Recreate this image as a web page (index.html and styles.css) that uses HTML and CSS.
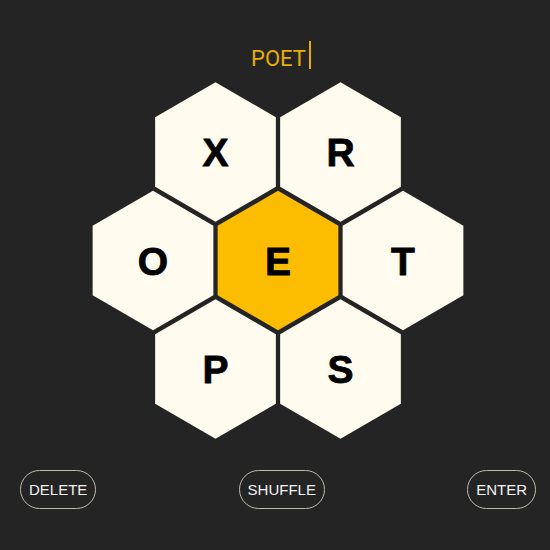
FILE: index.html
```html
<!DOCTYPE html>
<html>
<head>
<meta charset="utf-8">
<link rel="stylesheet" href="styles.css">
</head>
<body>
<div class="app">
  <div class="title">
    <span class="word">POET</span><span class="cursor"></span>
  </div>
  <div class="hive-wrap">
    <svg class="hive" width="380" height="360" viewBox="0 0 380 360">
      <defs>
        <polygon id="hex" points="0,-69.7 60.36,-34.85 60.36,34.85 0,69.7 -60.36,34.85 -60.36,-34.85"/>
      </defs>
      <g class="cell outer" transform="translate(127.5 72)"><use href="#hex"/><text y="14">X</text></g>
      <g class="cell outer" transform="translate(252.5 72)"><use href="#hex"/><text y="14">R</text></g>
      <g class="cell outer" transform="translate(65 180.5)"><use href="#hex"/><text y="14">O</text></g>
      <g class="cell center" transform="translate(190 180.5)"><use href="#hex"/><text y="14">E</text></g>
      <g class="cell outer" transform="translate(315 180.5)"><use href="#hex"/><text y="14">T</text></g>
      <g class="cell outer" transform="translate(127.5 289)"><use href="#hex"/><text y="14">P</text></g>
      <g class="cell outer" transform="translate(252.5 289)"><use href="#hex"/><text y="14">S</text></g>
    </svg>
  </div>
  <div class="controls">
    <button class="btn">DELETE</button>
    <button class="btn">SHUFFLE</button>
    <button class="btn">ENTER</button>
  </div>
</div>
</body>
</html>
```
FILE: styles.css
```css
html, body {
  margin: 0;
  padding: 0;
  background: #242424;
}
.app {
  width: 550px;
  height: 550px;
  box-sizing: border-box;
  padding: 0 14px 0 20px;
  display: flex;
  flex-direction: column;
}
.title {
  height: 80px;
  box-sizing: border-box;
  padding-top: 45px;
  padding-left: 6px;
  display: flex;
  justify-content: center;
  align-items: flex-start;
}
.word {
  font-family: Roboto, "Liberation Sans", sans-serif;
  font-size: 22px;
  line-height: 28px;
  color: #e8ae00;
}
.cursor {
  width: 2px;
  height: 28px;
  margin-top: -4px;
  margin-left: 3px;
  background: #e8ae00;
}
.hive-wrap {
  display: flex;
  justify-content: center;
  height: 360px;
}
.hive {
  display: block;
}
.cell use {
  fill: #fffbee;
}
.cell.center use {
  fill: #fcbd00;
}
.cell text {
  font-family: "Liberation Sans", Arial, sans-serif;
  font-weight: bold;
  font-size: 39px;
  fill: #000;
  stroke: #000;
  stroke-width: 0.8px;
  text-anchor: middle;
}
.controls {
  margin-top: 30px;
  display: flex;
  justify-content: space-between;
}
.btn {
  font-family: "Liberation Sans", Arial, sans-serif;
  font-size: 15px;
  line-height: 17px;
  padding: 10px 8px;
  border: 1px solid #bdb9ac;
  border-radius: 20px;
  background: transparent;
  color: #f2f2f2;
  margin: 0;
}
```
